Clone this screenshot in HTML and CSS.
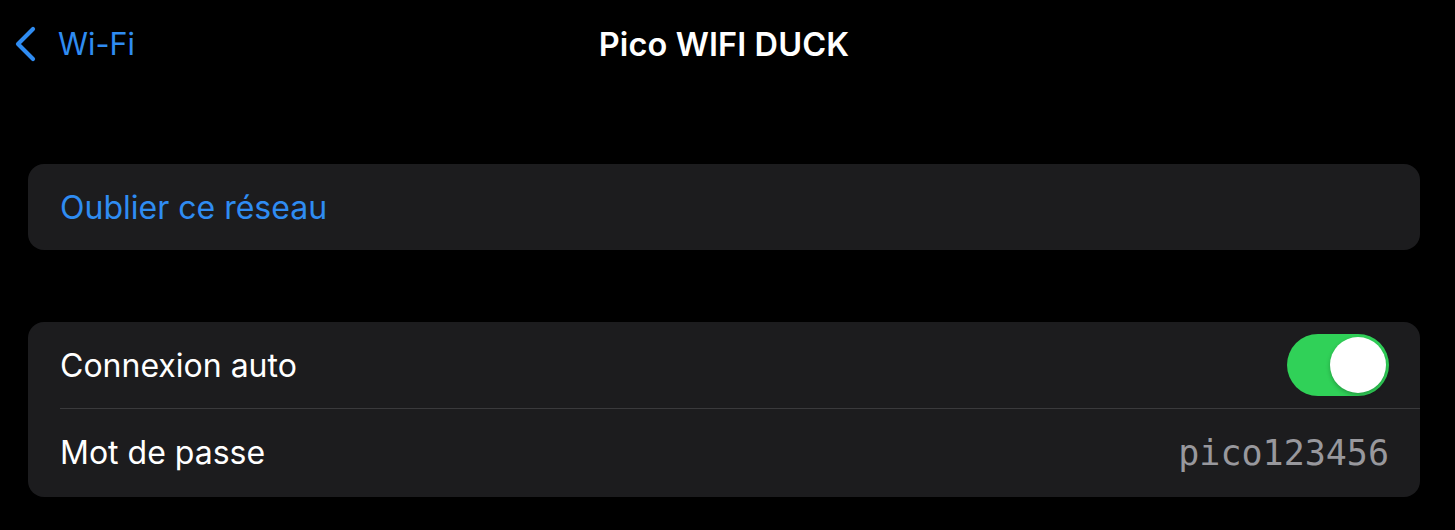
FILE: index.html
```html
<!DOCTYPE html>
<html lang="fr">
<head>
<meta charset="utf-8">
<title>Pico WIFI DUCK</title>
<link rel="stylesheet" href="styles.css">
</head>
<body>
<div class="screen">
  <header class="navbar">
    <a class="back" href="#">
      <svg class="chevron" width="24" height="36" viewBox="0 0 24 36" aria-hidden="true">
        <path d="M20 3 L5 18 L20 33" fill="none" stroke="#2f8cf2" stroke-width="4.2" stroke-linecap="round" stroke-linejoin="round"/>
      </svg>
      <span class="back-label">Wi-Fi</span>
    </a>
    <h1 class="title">Pico WIFI DUCK</h1>
  </header>

  <section class="group group-first">
    <div class="row">
      <span class="action">Oublier ce réseau</span>
    </div>
  </section>

  <section class="group">
    <div class="row">
      <span class="label">Connexion auto</span>
      <span class="toggle"><span class="knob"></span></span>
    </div>
    <div class="row row-sep">
      <span class="label">Mot de passe</span>
      <span class="value">pico123456</span>
    </div>
  </section>
</div>
</body>
</html>
```

FILE: styles.css
```css
* { box-sizing: border-box; }
html, body {
  margin: 0;
  padding: 0;
  background: #000;
}
body {
  font-family: Inter, "Noto Sans", "Liberation Sans", sans-serif;
  color: #fff;
  width: 1455px;
  height: 530px;
  overflow: hidden;
}
.screen {
  padding: 0 35px 0 28px;
}
.navbar {
  position: relative;
  height: 88px;
  display: flex;
  align-items: center;
  justify-content: center;
}
.back {
  position: absolute;
  left: -15px;
  top: 26px;
  display: flex;
  align-items: center;
  gap: 21px;
  text-decoration: none;
  color: #2f8cf2;
}
.chevron { display: block; }
.back-label {
  font-size: 30.5px;
  line-height: 36px;
}
.title {
  margin: 0;
  font-size: 32.5px;
  font-weight: 600;
  letter-spacing: 0.1px;
}
.group {
  background: #1c1c1e;
  border-radius: 16px;
  margin-top: 72px;
  overflow: hidden;
}
.group-first { margin-top: 76px; }
.row {
  height: 86px;
  display: flex;
  align-items: center;
  justify-content: space-between;
  padding: 0 32px;
  position: relative;
}
.row-sep {
  height: 89px;
}
.row-sep::before {
  content: "";
  position: absolute;
  top: 0;
  left: 32px;
  right: 0;
  height: 1px;
  background: #3a3a3c;
}
.action {
  color: #2f8cf2;
  font-size: 32px;
}
.label {
  font-size: 32px;
  color: #fff;
}
.toggle {
  width: 102px;
  height: 62px;
  border-radius: 31px;
  background: #30d158;
  position: relative;
  margin-right: -1px;
}
.knob {
  position: absolute;
  right: 3px;
  top: 3px;
  width: 56px;
  height: 56px;
  border-radius: 50%;
  background: #fff;
  box-shadow: 0 2px 4px rgba(0,0,0,0.25);
}
.value {
  font-family: "DejaVu Sans Mono", "Liberation Mono", monospace;
  font-size: 35px;
  color: #98989d;
  margin-right: -1px;
}
```
